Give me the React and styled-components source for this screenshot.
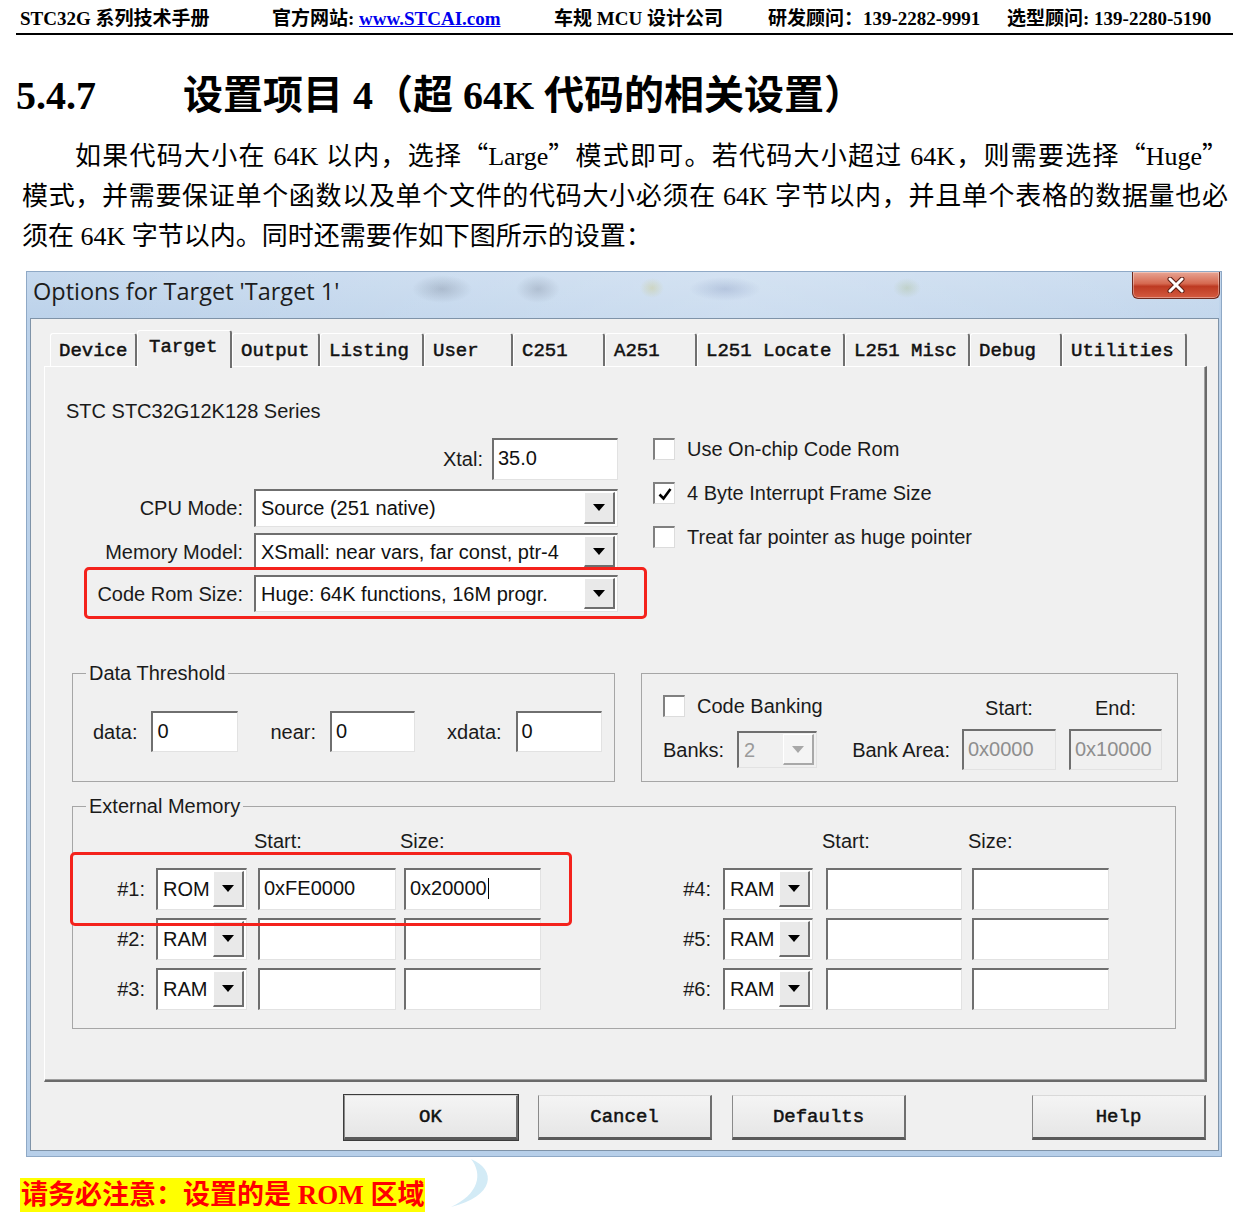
import React from "react";
import styled, { createGlobalStyle } from "styled-components";

const GlobalStyle = createGlobalStyle`
  html, body {
    margin: 0;
    padding: 0;
    background: #fff;
  }
  body {
    font-family: "Liberation Serif", "Noto Sans CJK SC", serif;
    color: #000;
  }
  * {
    box-sizing: border-box;
  }
`;

const Page = styled.div`
  width: 1250px;
  padding-bottom: 16px;
`;

const Header = styled.header`
  display: grid;
  grid-template-columns: 252px 282px 214px 239px auto;
  margin: 0 17px 0 16px;
  padding: 8px 0 3px 4px;
  border-bottom: 2px solid #000;
  font-size: 19px;
  font-weight: bold;
  line-height: 22px;
  white-space: nowrap;
`;

const HeadLink = styled.span`
  color: #0000ee;
  text-decoration: underline;
`;

const Heading = styled.h1`
  display: flex;
  margin: 37px 0 0 16px;
  font-size: 40px;
  line-height: 48px;
  font-weight: bold;
`;

const HeadNum = styled.span`
  width: 167px;
`;

const Para = styled.div`
  margin: 17px 22px 0 22px;
  font-size: 26px;
  line-height: 40px;
`;

const Line = styled.div`
  height: 40px;
  text-align: justify;
  text-align-last: ${(p) => (p.$last ? "left" : "justify")};
  text-indent: ${(p) => (p.$indent ? "53px" : "0")};
`;

const Quote = styled.span`
  font-family: "Noto Sans CJK SC", sans-serif;
  line-height: 1;
`;

/* ---------- dialog window ---------- */

const Dialog = styled.div`
  margin: 14px 0 0 26px;
  width: 1196px;
  padding: 0 2px 5px 3px;
  border: 1px solid #8fa9c6;
  background: linear-gradient(180deg, #c6d9ee 0, #bcd2ea 48px, #b7cfe9 100%);
  font-family: "Liberation Sans", Arial, sans-serif;
  color: #1a1a1a;
`;

const TitleBar = styled.div`
  height: 46px;
  display: flex;
  align-items: flex-start;
  justify-content: space-between;
  background:
    radial-gradient(ellipse 30px 14px at 412px 17px, rgba(60, 70, 90, 0.22), transparent),
    radial-gradient(ellipse 22px 14px at 508px 17px, rgba(60, 70, 90, 0.2), transparent),
    radial-gradient(ellipse 12px 10px at 622px 16px, rgba(200, 190, 90, 0.3), transparent),
    radial-gradient(ellipse 36px 12px at 695px 17px, rgba(70, 90, 150, 0.2), transparent),
    radial-gradient(ellipse 14px 10px at 877px 16px, rgba(150, 170, 90, 0.25), transparent),
    linear-gradient(90deg, rgba(255, 255, 255, 0) 0, rgba(255, 255, 255, 0.25) 60%, rgba(255, 255, 255, 0.1) 100%);
`;

const WindowTitle = styled.div`
  padding: 3px 0 0 3px;
  font-family: "Open Sans", "Liberation Sans", sans-serif;
  font-size: 23.5px;
  line-height: 32px;
  color: #1c1c1c;
`;

const CloseBtn = styled.div`
  width: 88px;
  height: 27px;
  margin-right: -1px;
  display: flex;
  align-items: center;
  justify-content: center;
  border: 1px solid #6e2a1e;
  border-top: none;
  border-radius: 0 0 6px 6px;
  background: linear-gradient(180deg, #e8a594 0%, #d5684f 45%, #bd3a22 55%, #d45b40 100%);
  box-shadow: inset 0 0 0 1px rgba(255, 255, 255, 0.35);
`;

const Client = styled.div`
  border: 1px solid #7f93a8;
  background: #f0f0f0;
  padding: 11px 11px 10px 13px;
`;

const TabRow = styled.div`
  display: flex;
  align-items: flex-end;
  height: 36px;
  margin-left: 6px;
`;

const Tab = styled.div`
  position: relative;
  z-index: ${(p) => (p.$active ? 2 : 1)};
  width: ${(p) => p.$w}px;
  height: ${(p) => (p.$active ? 38 : 33)}px;
  margin-bottom: ${(p) => (p.$active ? -2 : 0)}px;
  padding: ${(p) => (p.$active ? "6px 0 0 11px" : "7px 0 0 8px")};
  background: #f0f0f0;
  border-top: 1px solid #fff;
  border-left: 1px solid #fff;
  border-right: 2px solid #707070;
  border-radius: 3px 3px 0 0;
  font-family: "Liberation Mono", "DejaVu Sans Mono", monospace;
  font-size: 19px;
  font-weight: normal;
  -webkit-text-stroke: 0.5px #111;
  line-height: 20px;
  color: #111;
  white-space: pre;
`;

const Panel = styled.div`
  height: 716px;
  border-top: 1px solid #fff;
  border-left: 1px solid #fff;
  border-right: 2px solid #6a6a6a;
  border-bottom: 2px solid #6a6a6a;
  box-shadow: inset -1px -1px 0 #a0a0a0;
  padding: 32px 0 0 21px;
  font-size: 20px;
  line-height: 24px;
`;

const Series = styled.div`
  height: 24px;
`;

const TopSection = styled.div`
  position: relative;
  display: grid;
  grid-template-columns: 552px auto;
  column-gap: 35px;
  margin-top: 15px;
`;

const LeftCol = styled.div`
  display: flex;
  flex-direction: column;
`;

const FormRow = styled.div`
  display: flex;
  justify-content: flex-end;
  align-items: center;
  gap: ${(p) => p.$gap}px;
  margin-top: ${(p) => p.$mt || 0}px;
`;

const RightCol = styled.div`
  display: flex;
  flex-direction: column;
  gap: 22px;
`;

const CheckRow = styled.div`
  display: flex;
  align-items: center;
  gap: 12px;
  height: 22px;
  grid-column: ${(p) => p.$span || "auto"};
`;

const Box = styled.span`
  width: 22px;
  height: 22px;
  flex: none;
  display: flex;
  align-items: center;
  justify-content: center;
  background: #fff;
  border-top: 2px solid #808080;
  border-left: 2px solid #808080;
  border-right: 1px solid #dcdcdc;
  border-bottom: 1px solid #dcdcdc;
`;

const Field = styled.div`
  width: ${(p) => p.$w}px;
  height: ${(p) => p.$h || 41}px;
  flex: none;
  display: flex;
  align-items: center;
  padding: 0 4px 3px 4px;
  background: ${(p) => (p.$disabled ? "#f0f0f0" : "#fff")};
  color: ${(p) => (p.$disabled ? "#8e8e8e" : "#111")};
  border-top: 2px solid #6f6f6f;
  border-left: 2px solid #6f6f6f;
  border-right: 1px solid #e2e2e2;
  border-bottom: 1px solid #e2e2e2;
  white-space: nowrap;
  justify-self: ${(p) => p.$justify || "start"};
`;

const Caret = styled.span`
  display: inline-block;
  width: 1px;
  height: 21px;
  margin-left: 1px;
  background: #000;
`;

const Combo = styled.div`
  width: ${(p) => p.$w}px;
  height: ${(p) => p.$h || 38}px;
  flex: none;
  display: flex;
  background: ${(p) => (p.$disabled ? "#f0f0f0" : "#fff")};
  color: ${(p) => (p.$disabled ? "#9a9a9a" : "#111")};
  border-top: 2px solid #6f6f6f;
  border-left: 2px solid #6f6f6f;
  border-right: 1px solid #e2e2e2;
  border-bottom: 1px solid #e2e2e2;
  white-space: nowrap;
`;

const ComboText = styled.div`
  flex: 1;
  display: flex;
  align-items: center;
  padding: 0 0 1px 5px;
  overflow: hidden;
`;

const ComboBtn = styled.div`
  width: 31px;
  flex: none;
  margin: 1px 2px 2px 0;
  display: flex;
  align-items: center;
  justify-content: center;
  background: ${(p) => (p.$disabled ? "#f4f4f4" : "#e9e9e9")};
  border-top: 1px solid #fff;
  border-left: 1px solid #fff;
  border-right: 2px solid ${(p) => (p.$disabled ? "#a8a8a8" : "#6e6e6e")};
  border-bottom: 2px solid ${(p) => (p.$disabled ? "#a8a8a8" : "#6e6e6e")};
`;

const Highlight = styled.div`
  position: absolute;
  left: ${(p) => p.$x}px;
  top: ${(p) => p.$y}px;
  width: ${(p) => p.$w}px;
  height: ${(p) => p.$h}px;
  border: 3px solid #f4221c;
  border-radius: 5px;
  pointer-events: none;
`;

const GroupArea = styled.div`
  margin-left: 6px;
`;

const GroupRow = styled.div`
  display: flex;
  align-items: flex-end;
  gap: 26px;
  margin-top: 49px;
`;

const Group = styled.fieldset`
  margin: 0;
  padding: 0;
  min-width: 0;
  width: ${(p) => p.$w}px;
  height: ${(p) => (p.$h ? `${p.$h}px` : "auto")};
  margin-top: ${(p) => p.$mt || 0}px;
  border: 1px solid #a6a6a6;
`;

const Legend = styled.legend`
  margin-left: 13px;
  padding: 0 3px;
  font-size: 20px;
  line-height: 24px;
`;

const ThresholdRow = styled.div`
  display: flex;
  align-items: center;
  gap: 32px;
  padding: 26px 0 0 20px;
`;

const Pair = styled.div`
  display: flex;
  align-items: center;
  gap: 14px;
`;

const BankBox = styled.div`
  width: 537px;
  height: 109px;
  border: 1px solid #a6a6a6;
  padding: 19px 15px 0 21px;
  display: grid;
  grid-template-columns: 74px 80px 145px 94px 106px;
  grid-template-rows: 26px 41px;
  row-gap: 10px;
  align-items: center;
`;

const ColHead = styled.div`
  align-self: end;
  text-align: center;
  width: ${(p) => p.$w}px;
  justify-self: ${(p) => p.$justify || "start"};
  line-height: 22px;
`;

const RightLabel = styled.div`
  text-align: right;
  padding-right: ${(p) => p.$pr}px;
`;

const MemGrid = styled.div`
  position: relative;
  display: grid;
  grid-template-columns: 83px 102px 146px 137px 182px 103px 146px 137px;
  grid-template-rows: 31px 42px 42px 42px;
  row-gap: 8px;
  align-items: center;
  padding: 11px 0 18px 0;
`;

const MemHead = styled.div`
  align-self: start;
  margin-left: -4px;
  grid-column: ${(p) => p.$col};
`;

const ButtonRow = styled.div`
  display: flex;
  justify-content: flex-end;
  gap: 20px;
  margin-top: 13px;
  padding-right: 1px;
`;

const Button = styled.div`
  width: 174px;
  height: 45px;
  margin-left: ${(p) => p.$ml || 0}px;
  display: flex;
  align-items: center;
  justify-content: center;
  background: linear-gradient(180deg, #f4f4f4 0%, #e6e6e6 100%);
  border-top: 1px solid #d9d9d9;
  border-left: 1px solid #8a8a8a;
  border-right: 2px solid #6f6f6f;
  border-bottom: 3px solid #5a5a5a;
  box-shadow: ${(p) => (p.$default ? "0 0 0 1px #3c3c3c" : "none")};
  font-family: "Liberation Mono", "DejaVu Sans Mono", monospace;
  font-size: 19px;
  font-weight: normal;
  -webkit-text-stroke: 0.5px #111;
  color: #111;
`;

const NoteRow = styled.div`
  display: flex;
  align-items: flex-start;
  margin: 1px 0 0 20px;
`;

const Note = styled.div`
  margin-top: 20px;
  padding: 0 1px;
  background: #ffff00;
  color: #ff0000;
  font-size: 27px;
  line-height: 34px;
  font-weight: bold;
  white-space: nowrap;
`;

const Arc = styled.svg`
  margin-left: 20px;
  flex: none;
`;

/* ---------- small drawings ---------- */

const Arrow = ({ disabled }) => (
  <svg width="12" height="7" viewBox="0 0 12 7">
    <polygon points="0,0 12,0 6,7" fill={disabled ? "#a8a8a8" : "#000"} />
  </svg>
);

const CheckMark = () => (
  <svg width="16" height="16" viewBox="0 0 16 16">
    <path d="M2.5 8.5 L6.5 12.5 L13.5 3" fill="none" stroke="#000" strokeWidth="2.6" />
  </svg>
);

const CloseGlyph = () => (
  <svg width="22" height="16" viewBox="0 0 22 16">
    <path d="M5 2 L17 14 M17 2 L5 14" stroke="#5b1d12" strokeWidth="5" strokeLinecap="round" />
    <path d="M5 2 L17 14 M17 2 L5 14" stroke="#fff" strokeWidth="3" strokeLinecap="round" />
  </svg>
);

const Select = ({ w, h, value, disabled }) => (
  <Combo $w={w} $h={h} $disabled={disabled}>
    <ComboText>{value}</ComboText>
    <ComboBtn $disabled={disabled}>
      <Arrow disabled={disabled} />
    </ComboBtn>
  </Combo>
);

const Check = ({ checked, label, span }) => (
  <CheckRow $span={span}>
    <Box>{checked && <CheckMark />}</Box>
    <span>{label}</span>
  </CheckRow>
);

/* ---------- data ---------- */

const tabs = [
  { label: "Device", w: 87 },
  { label: "Target", w: 95, active: true },
  { label: "Output", w: 88 },
  { label: "Listing", w: 104 },
  { label: "User", w: 89 },
  { label: "C251", w: 92 },
  { label: "A251", w: 92 },
  { label: "L251 Locate", w: 148 },
  { label: "L251 Misc", w: 125 },
  { label: "Debug", w: 92 },
  { label: "Utilities", w: 125 },
];

const memRows = [
  [
    { n: 1, type: "ROM", start: "0xFE0000", size: "0x20000", caret: true },
    { n: 4, type: "RAM" },
  ],
  [{ n: 2, type: "RAM" }, { n: 5, type: "RAM" }],
  [{ n: 3, type: "RAM" }, { n: 6, type: "RAM" }],
];

const thresholds = [
  { label: "data:", w: 87 },
  { label: "near:", w: 85 },
  { label: "xdata:", w: 86 },
];

const MemCells = ({ m, right }) => (
  <>
    <RightLabel $pr={right ? 12 : 11}>#{m.n}:</RightLabel>
    <Select w={right ? 90 : 91} h={42} value={m.type} />
    <Field $w={right ? 136 : 138} $h={42}>
      {m.start || ""}
    </Field>
    <Field $w={137} $h={42}>
      {m.size || ""}
      {m.caret && <Caret />}
    </Field>
  </>
);

export default function App() {
  return (
    <Page>
      <GlobalStyle />
      <Header>
        <span>STC32G 系列技术手册</span>
        <span>
          官方网站: <HeadLink>www.STCAI.com</HeadLink>
        </span>
        <span>车规 MCU 设计公司</span>
        <span>研发顾问：139-2282-9991</span>
        <span>选型顾问: 139-2280-5190</span>
      </Header>

      <Heading>
        <HeadNum>5.4.7</HeadNum>
        <span>设置项目 4（超 64K 代码的相关设置）</span>
      </Heading>

      <Para>
        <Line $indent>
          如果代码大小在 64K 以内，选择<Quote>“</Quote>Large<Quote>”</Quote>模式即可。若代码大小超过 64K，则需要选择<Quote>“</Quote>Huge<Quote>”</Quote>
        </Line>
        <Line>
          模式，并需要保证单个函数以及单个文件的代码大小必须在 64K 字节以内，并且单个表格的数据量也必
        </Line>
        <Line $last>须在 64K 字节以内。同时还需要作如下图所示的设置：</Line>
      </Para>

      <Dialog>
        <TitleBar>
          <WindowTitle>Options for Target 'Target 1'</WindowTitle>
          <CloseBtn>
            <CloseGlyph />
          </CloseBtn>
        </TitleBar>

        <Client>
          <TabRow>
            {tabs.map((t) => (
              <Tab key={t.label} $w={t.w} $active={t.active}>
                {t.label}
              </Tab>
            ))}
          </TabRow>

          <Panel>
            <Series>STC STC32G12K128 Series</Series>

            <TopSection>
              <LeftCol>
                <FormRow $gap={9}>
                  <span>Xtal:</span>
                  <Field $w={126} $h={42}>35.0</Field>
                </FormRow>
                <FormRow $gap={11} $mt={9}>
                  <span>CPU Mode:</span>
                  <Select w={364} h={38} value="Source (251 native)" />
                </FormRow>
                <FormRow $gap={11} $mt={6}>
                  <span>Memory Model:</span>
                  <Select w={364} h={37} value="XSmall: near vars, far const, ptr-4" />
                </FormRow>
                <FormRow $gap={11} $mt={5}>
                  <span>Code Rom Size:</span>
                  <Select w={364} h={37} value="Huge: 64K functions, 16M progr." />
                </FormRow>
              </LeftCol>

              <RightCol>
                <Check label="Use On-chip Code Rom" />
                <Check checked label="4 Byte Interrupt Frame Size" />
                <Check label="Treat far pointer as huge pointer" />
              </RightCol>

              <Highlight $x={18} $y={129} $w={563} $h={52} />
            </TopSection>

            <GroupArea>
              <GroupRow>
                <Group $w={543} $h={121}>
                  <Legend>Data Threshold</Legend>
                  <ThresholdRow>
                    {thresholds.map((t) => (
                      <Pair key={t.label}>
                        <span>{t.label}</span>
                        <Field $w={t.w}>0</Field>
                      </Pair>
                    ))}
                  </ThresholdRow>
                </Group>

                <BankBox>
                  <Check label="Code Banking" span="1 / 4" />
                  <ColHead $w={94}>Start:</ColHead>
                  <ColHead $w={93} $justify="end">
                    End:
                  </ColHead>
                  <span>Banks:</span>
                  <Select w={80} h={37} value="2" disabled />
                  <RightLabel $pr={12}>Bank Area:</RightLabel>
                  <Field $w={94} $disabled>
                    0x0000
                  </Field>
                  <Field $w={93} $disabled $justify="end">
                    0x10000
                  </Field>
                </BankBox>
              </GroupRow>

              <Group $w={1104} $mt={12}>
                <Legend>External Memory</Legend>
                <MemGrid>
                  <MemHead $col={3}>Start:</MemHead>
                  <MemHead $col={4}>Size:</MemHead>
                  <MemHead $col={7}>Start:</MemHead>
                  <MemHead $col={8}>Size:</MemHead>
                  {memRows.map(([l, r]) => (
                    <React.Fragment key={l.n}>
                      <MemCells m={l} />
                      <MemCells m={r} right />
                    </React.Fragment>
                  ))}
                  <Highlight $x={-3} $y={34} $w={502} $h={74} />
                </MemGrid>
              </Group>
            </GroupArea>
          </Panel>

          <ButtonRow>
            <Button $default>OK</Button>
            <Button>Cancel</Button>
            <Button>Defaults</Button>
            <Button $ml={106}>Help</Button>
          </ButtonRow>
        </Client>
      </Dialog>

      <NoteRow>
        <Note>请务必注意：设置的是 ROM 区域</Note>
        <Arc width="52" height="50" viewBox="0 0 52 50">
          <path d="M26 1 C52 12 50 38 6 49 C34 36 38 16 26 1 Z" fill="#d3ebf6" />
        </Arc>
      </NoteRow>
    </Page>
  );
}
